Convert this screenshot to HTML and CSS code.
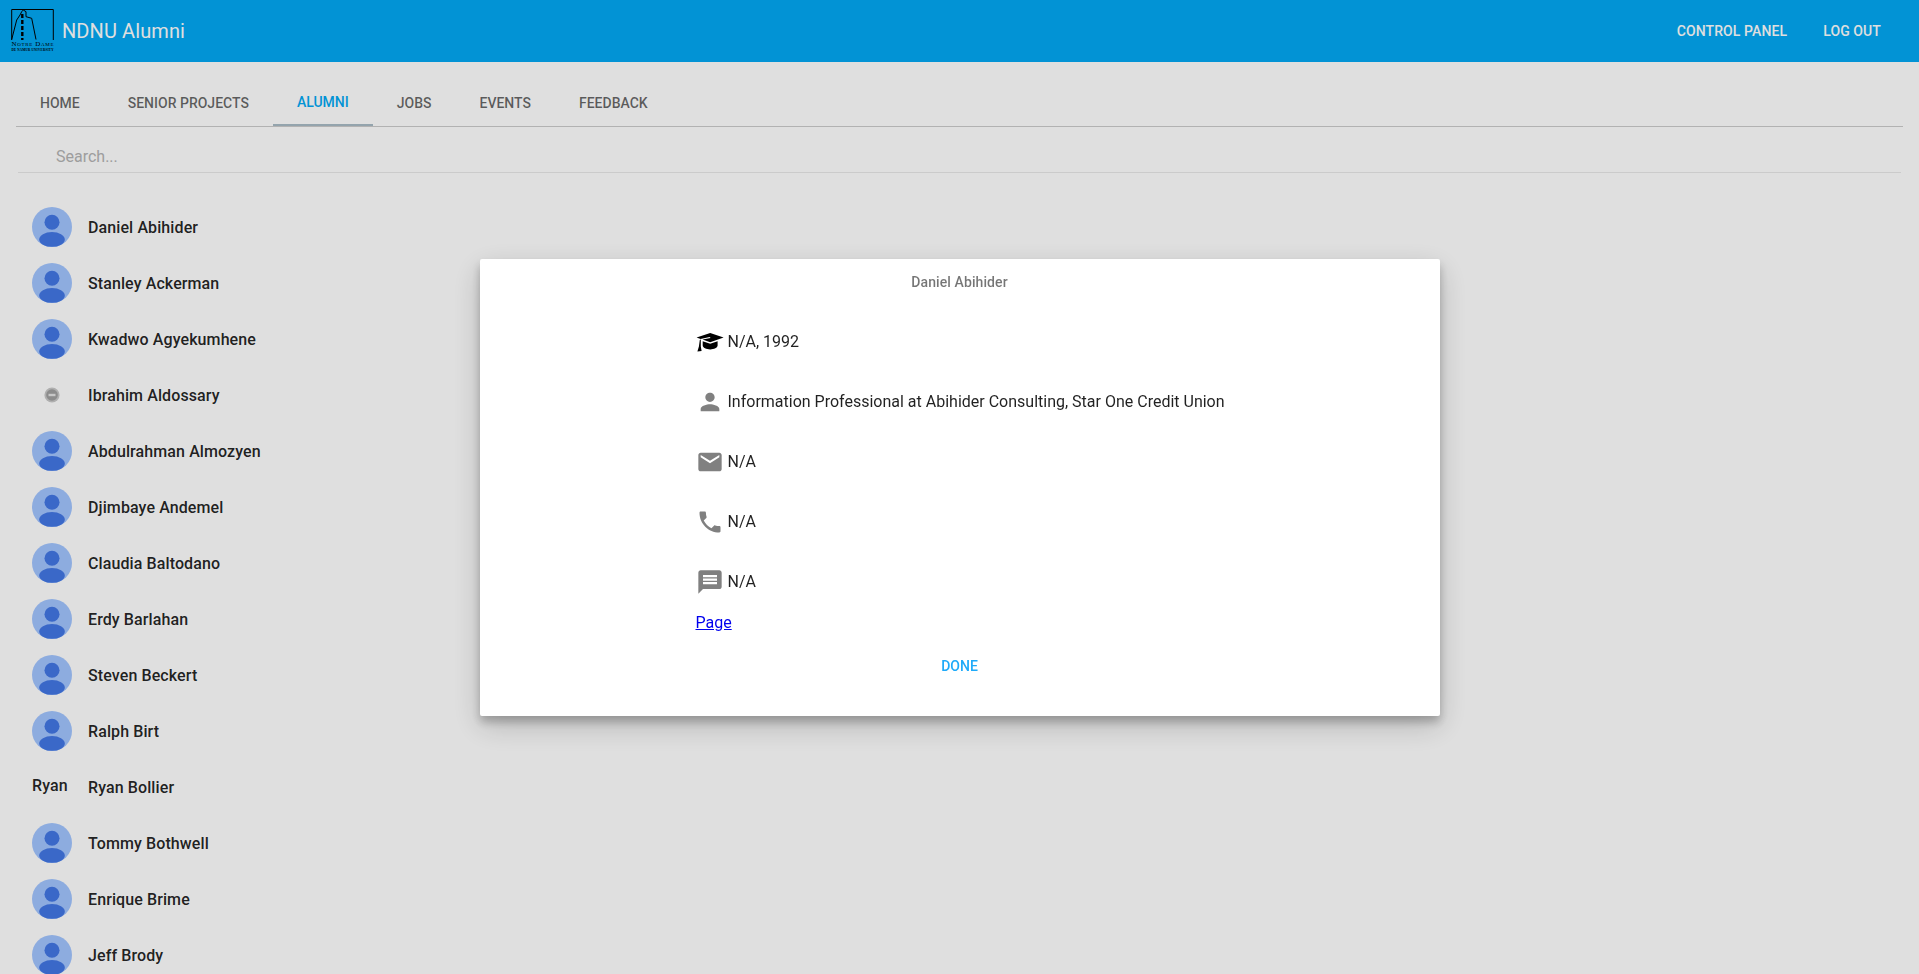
FILE: index.html
```html
<!DOCTYPE html>
<html lang="en">
<head>
    <meta charset="UTF-8">
    <meta name="viewport" content="width=device-width, initial-scale=1.0">
    <title>NDNU Alumni</title>
    <link rel="stylesheet" href="styles.css">
</head>
<body>
    <svg class="sprite" width="0" height="0">
        <symbol id="default-avatar" viewBox="0 0 40 40">
            <circle cx="20" cy="20" r="20" fill="#a2c5ff"></circle>
            <circle cx="20" cy="15.2" r="7.5" fill="#4377e5"></circle>
            <ellipse cx="20" cy="32.4" rx="12.8" ry="7.4" fill="#4377e5"></ellipse>
        </symbol>
    </svg>

    <header class="navbar">
        <div class="brand">
            <svg class="logo" viewBox="0 0 44 44">
                <path d="M1.7 31 V0.5 H43.3 V31" fill="none" stroke="#000"></path>
                <path d="M1.7 30.5 L6.7 11 L10 6 L11.7 2.7 L13.3 1 L16 2.7 L16 7.7 L21.7 9.3 L26 30.5" fill="none" stroke="#000"></path>
                <path d="M12.3 5 V31" fill="none" stroke="#000" stroke-width="2.4" stroke-dasharray="4 2"></path>
                <text class="logo-name" x="1.5" y="37" textLength="42">Notre Dame</text>
                <text class="logo-sub" x="1.5" y="41.6" textLength="42">DE NAMUR UNIVERSITY</text>
            </svg>
            <span class="app-title">NDNU Alumni</span>
        </div>
        <nav class="nav-actions">
            <a class="nav-button">Control Panel</a>
            <a class="nav-button">Log Out</a>
        </nav>
    </header>

    <main class="content">
        <div class="tabs">
            <a class="tab">Home</a>
            <a class="tab">Senior Projects</a>
            <a class="tab active">Alumni</a>
            <a class="tab">Jobs</a>
            <a class="tab">Events</a>
            <a class="tab">Feedback</a>
        </div>

        <div class="search">Search...</div>

        <ul class="alumni-list">
            <li class="alumni-row"><span class="thumb"><svg class="avatar"><use href="#default-avatar"></use></svg></span>Daniel Abihider</li>
            <li class="alumni-row"><span class="thumb"><svg class="avatar"><use href="#default-avatar"></use></svg></span>Stanley Ackerman</li>
            <li class="alumni-row"><span class="thumb"><svg class="avatar"><use href="#default-avatar"></use></svg></span>Kwadwo Agyekumhene</li>
            <li class="alumni-row">
                <span class="thumb thumb-broken">
                    <svg class="broken" viewBox="0 0 16 16">
                        <circle cx="8" cy="8" r="7.6" fill="#c9c9c9"></circle>
                        <circle cx="8" cy="8" r="5.8" fill="#a0a0a0"></circle>
                        <rect x="4.5" y="6.8" width="7" height="2.4" fill="#e4e4e4"></rect>
                    </svg>
                </span>Ibrahim Aldossary
            </li>
            <li class="alumni-row"><span class="thumb"><svg class="avatar"><use href="#default-avatar"></use></svg></span>Abdulrahman Almozyen</li>
            <li class="alumni-row"><span class="thumb"><svg class="avatar"><use href="#default-avatar"></use></svg></span>Djimbaye Andemel</li>
            <li class="alumni-row"><span class="thumb"><svg class="avatar"><use href="#default-avatar"></use></svg></span>Claudia Baltodano</li>
            <li class="alumni-row"><span class="thumb"><svg class="avatar"><use href="#default-avatar"></use></svg></span>Erdy Barlahan</li>
            <li class="alumni-row"><span class="thumb"><svg class="avatar"><use href="#default-avatar"></use></svg></span>Steven Beckert</li>
            <li class="alumni-row"><span class="thumb"><svg class="avatar"><use href="#default-avatar"></use></svg></span>Ralph Birt</li>
            <li class="alumni-row"><span class="thumb thumb-alt">Ryan</span>Ryan Bollier</li>
            <li class="alumni-row"><span class="thumb"><svg class="avatar"><use href="#default-avatar"></use></svg></span>Tommy Bothwell</li>
            <li class="alumni-row"><span class="thumb"><svg class="avatar"><use href="#default-avatar"></use></svg></span>Enrique Brime</li>
            <li class="alumni-row"><span class="thumb"><svg class="avatar"><use href="#default-avatar"></use></svg></span>Jeff Brody</li>
        </ul>
    </main>

    <div class="overlay">
        <section class="dialog">
            <h2 class="dialog-title">Daniel Abihider</h2>
            <div class="details">
                <div class="detail-row">
                    <svg class="detail-icon" viewBox="0 0 28 28">
                        <path fill="#000" d="M14.2 5 L27.6 9.6 L14.2 14.2 L6.6 11.6 L14.6 9.9 L13.6 9.1 L4.6 11 L0.6 9.6 Z M6.7 13.3 L14.2 15.8 L21.6 13.3 V17.6 C21.6 20 18 21.4 14.2 21.4 C10.4 21.4 6.7 20 6.7 17.6 Z M3.8 11.9 L4.8 11.6 V18.6 L5.6 23 L1.4 23.6 L2.9 18.6 Z"></path>
                    </svg>
                    <span>N/A, 1992</span>
                </div>
                <div class="detail-row">
                    <svg class="detail-icon" viewBox="0 0 24 24"><path d="M12 12c2.21 0 4-1.79 4-4s-1.79-4-4-4-4 1.79-4 4 1.79 4 4 4zm0 2c-2.67 0-8 1.34-8 4v2h16v-2c0-2.66-5.33-4-8-4z"></path></svg>
                    <span>Information Professional at Abihider Consulting, Star One Credit Union</span>
                </div>
                <div class="detail-row">
                    <svg class="detail-icon" viewBox="0 0 24 24"><path d="M20 4H4c-1.1 0-1.99.9-1.99 2L2 18c0 1.1.9 2 2 2h16c1.1 0 2-.9 2-2V6c0-1.1-.9-2-2-2zm0 4l-8 5-8-5V6l8 5 8-5v2z"></path></svg>
                    <span>N/A</span>
                </div>
                <div class="detail-row">
                    <svg class="detail-icon" viewBox="0 0 24 24"><path d="M6.62 10.79c1.44 2.83 3.76 5.14 6.59 6.59l2.2-2.2c.27-.27.67-.36 1.02-.24 1.12.37 2.33.57 3.57.57.55 0 1 .45 1 1V20c0 .55-.45 1-1 1-9.39 0-17-7.61-17-17 0-.55.45-1 1-1h3.5c.55 0 1 .45 1 1 0 1.25.2 2.45.57 3.57.11.35.03.74-.25 1.02l-2.2 2.2z"></path></svg>
                    <span>N/A</span>
                </div>
                <div class="detail-row">
                    <svg class="detail-icon" viewBox="0 0 24 24"><path d="M20 2H4c-1.1 0-1.99.9-1.99 2L2 22l4-4h14c1.1 0 2-.9 2-2V4c0-1.1-.9-2-2-2zm-2 12H6v-2h12v2zm0-3H6V9h12v2zm0-3H6V6h12v2z"></path></svg>
                    <span>N/A</span>
                </div>
                <a class="page-link" href="#">Page</a>
            </div>
            <div class="dialog-actions">
                <button class="done-button">Done</button>
            </div>
        </section>
    </div>
</body>
</html>
```

FILE: styles.css
```css
html, body {
    margin: 0;
    height: 100%;
    overflow: hidden;
}

body {
    background-color: #fff;
    color: rgba(0, 0, 0, 0.87);
    font-family: Roboto, sans-serif;
}

.sprite {
    display: block;
}

/* top bar */
.navbar {
    display: flex;
    align-items: center;
    justify-content: space-between;
    height: 62px;
    padding: 0 24px 0 10px;
    background-color: #03a9f4;
    color: #fff;
}

.brand {
    display: flex;
    align-items: center;
    gap: 8px;
}

.logo {
    width: 44px;
    height: 44px;
}

.logo-name {
    font-family: "Liberation Serif", serif;
    font-size: 7px;
    font-variant: small-caps;
}

.logo-sub {
    font-family: "Liberation Serif", serif;
    font-size: 3.2px;
    font-weight: bold;
}

.app-title {
    font-size: 20px;
    letter-spacing: 0.1px;
}

.nav-actions {
    display: flex;
    gap: 36px;
    padding-right: 14px;
}

.nav-button {
    font-size: 14px;
    font-weight: 500;
    letter-spacing: 0.1px;
    text-transform: uppercase;
}

/* tabs */
.content {
    padding: 16px 16px 0;
}

.tabs {
    display: flex;
    height: 48px;
    border-bottom: 1px solid #ccc;
}

.tab {
    display: flex;
    align-items: center;
    height: 48px;
    box-sizing: border-box;
    padding: 2px 24px 0;
    font-size: 14px;
    font-weight: 500;
    text-transform: uppercase;
    color: rgba(0, 0, 0, 0.6);
}

.tab.active {
    color: #03a9f4;
    border-bottom: 2px solid #aabcc6;
}

.search {
    margin: 0 2px;
    padding-left: 38px;
    height: 45px;
    line-height: 60px;
    font-size: 16px;
    color: #b4b4b4;
    border-bottom: 1px solid #e8e8e8;
}

/* alumni list */
.alumni-list {
    list-style: none;
    margin: 26px 0 0;
    padding: 0 16px;
}

.alumni-row {
    display: flex;
    align-items: center;
    height: 56px;
    font-size: 16px;
    font-weight: 500;
    letter-spacing: 0.1px;
}

.thumb {
    display: flex;
    flex: none;
    align-items: center;
    width: 40px;
    height: 40px;
    margin-right: 16px;
}

.avatar {
    width: 40px;
    height: 40px;
}

.thumb-broken {
    justify-content: center;
}

.broken {
    width: 16px;
    height: 16px;
}

.thumb-alt {
    padding-bottom: 4px;
    box-sizing: border-box;
}

/* dialog */
.overlay {
    position: fixed;
    top: 0;
    left: 0;
    right: 0;
    bottom: 0;
    display: flex;
    align-items: center;
    justify-content: center;
    background-color: rgba(0, 0, 0, 0.125);
}

.dialog {
    width: 960px;
    height: 457px;
    box-sizing: border-box;
    padding-top: 15px;
    background-color: #fff;
    border-radius: 2px;
    box-shadow: 0 10px 30px rgba(0, 0, 0, 0.19), 0 6px 10px rgba(0, 0, 0, 0.23);
}

.dialog-title {
    margin: 0;
    line-height: 16px;
    font-size: 14px;
    font-weight: 500;
    letter-spacing: 0.1px;
    text-align: center;
    color: rgba(0, 0, 0, 0.54);
}

.details {
    margin: 22px 0 0 216px;
    font-size: 16px;
}

.detail-row {
    display: flex;
    align-items: center;
    height: 60px;
    gap: 4px;
}

.detail-icon {
    width: 28px;
    height: 28px;
    fill: #808080;
}

.page-link {
    display: block;
    margin-top: 1px;
    line-height: 20px;
    color: #00e;
}

.dialog-actions {
    margin-top: 23px;
    text-align: center;
}

.done-button {
    padding: 0;
    border: none;
    background: none;
    font-family: Roboto, sans-serif;
    font-size: 14px;
    font-weight: 500;
    text-transform: uppercase;
    color: #1eaaf9;
}
```
